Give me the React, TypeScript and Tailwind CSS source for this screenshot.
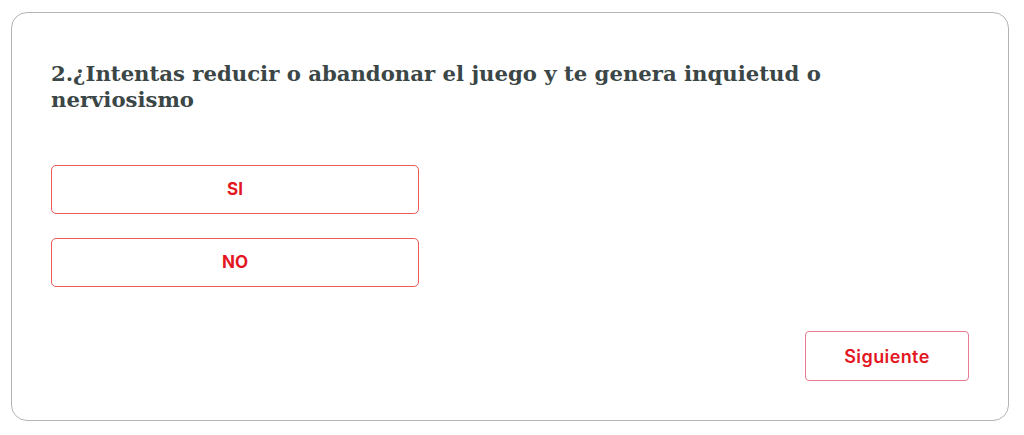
export default function App() {
    const options = ["SI", "NO"];

    return (
        <div className="min-h-screen bg-white pl-[11px] pt-[12px] pr-[15px]">
            <div className="flex flex-col rounded-[16px] border border-[#b4b4b4] bg-white px-[39px] pt-[48px] pb-[39px]">
                <h2
                    className="max-w-[800px] text-[21.2px] font-bold leading-[26px] text-[#3b4646]"
                    style={{ fontFamily: '"DejaVu Serif", "Liberation Serif", serif' }}
                >
                    2.¿Intentas reducir o abandonar el juego y te genera inquietud o nerviosismo
                </h2>

                <div className="mt-[52px] flex flex-col gap-[24px]">
                    {options.map((opt) => (
                        <button
                            key={opt}
                            className="flex h-[49px] w-[368px] items-center justify-center rounded-[5px] border border-[#ef5a5a] bg-white text-[17px] font-bold text-[#e3171f]"
                            style={{ fontFamily: 'Inter, "Liberation Sans", sans-serif' }}
                        >
                            {opt}
                        </button>
                    ))}
                </div>

                <div className="mt-[44px] flex justify-end">
                    <button
                        className="flex h-[50px] w-[164px] items-center justify-center rounded-[4px] border border-[#ea7a92] bg-white text-[18px] font-semibold tracking-[0.4px] text-[#e3171f]"
                        style={{ fontFamily: 'Inter, "Liberation Sans", sans-serif' }}
                    >
                        Siguiente
                    </button>
                </div>
            </div>
        </div>
    );
}
